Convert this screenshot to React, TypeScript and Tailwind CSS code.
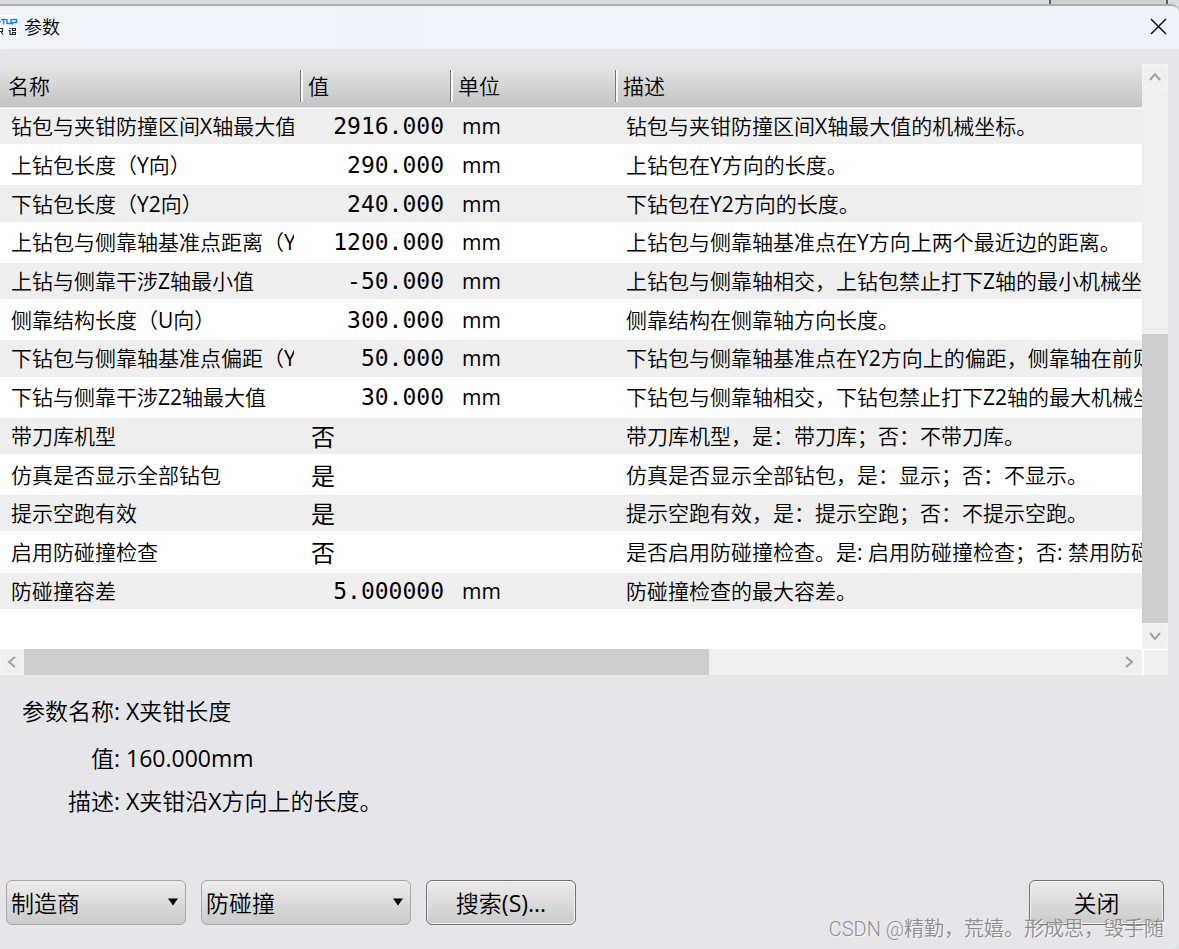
import type { ReactNode } from 'react';

interface Param {
  name: string;
  value: string;
  unit?: string;
  description: string;
}

const params: Param[] = [
  { name: '钻包与夹钳防撞区间X轴最大值', value: '2916.000', unit: 'mm', description: '钻包与夹钳防撞区间X轴最大值的机械坐标。' },
  { name: '上钻包长度（Y向）', value: '290.000', unit: 'mm', description: '上钻包在Y方向的长度。' },
  { name: '下钻包长度（Y2向）', value: '240.000', unit: 'mm', description: '下钻包在Y2方向的长度。' },
  { name: '上钻包与侧靠轴基准点距离（Y向）', value: '1200.000', unit: 'mm', description: '上钻包与侧靠轴基准点在Y方向上两个最近边的距离。' },
  { name: '上钻与侧靠干涉Z轴最小值', value: '-50.000', unit: 'mm', description: '上钻包与侧靠轴相交，上钻包禁止打下Z轴的最小机械坐标。' },
  { name: '侧靠结构长度（U向）', value: '300.000', unit: 'mm', description: '侧靠结构在侧靠轴方向长度。' },
  { name: '下钻包与侧靠轴基准点偏距（Y2向）', value: '50.000', unit: 'mm', description: '下钻包与侧靠轴基准点在Y2方向上的偏距，侧靠轴在前则为正。' },
  { name: '下钻与侧靠干涉Z2轴最大值', value: '30.000', unit: 'mm', description: '下钻包与侧靠轴相交，下钻包禁止打下Z2轴的最大机械坐标。' },
  { name: '带刀库机型', value: '否', description: '带刀库机型，是：带刀库；否：不带刀库。' },
  { name: '仿真是否显示全部钻包', value: '是', description: '仿真是否显示全部钻包，是：显示；否：不显示。' },
  { name: '提示空跑有效', value: '是', description: '提示空跑有效，是：提示空跑；否：不提示空跑。' },
  { name: '启用防碰撞检查', value: '否', description: '是否启用防碰撞检查。是: 启用防碰撞检查；否: 禁用防碰撞检查。' },
  { name: '防碰撞容差', value: '5.000000', unit: 'mm', description: '防碰撞检查的最大容差。' },
];

const columns = ['名称', '值', '单位', '描述'];

const details = [
  { label: '参数名称:', value: 'X夹钳长度' },
  { label: '值:', value: '160.000mm' },
  { label: '描述:', value: 'X夹钳沿X方向上的长度。' },
];

function AppIcon() {
  return (
    <svg width="18" height="24" viewBox="0 0 18 24" aria-hidden="true">
      <rect width="18" height="24" fill="#fff" />
      <g fill="none" stroke="#1683f5" strokeWidth="1.5">
        <path d="M0 6.5H1M1 4.5H6M3.5 4.5V9.5M7 4V8.5H11V4M12 4.5H16.5V7.5H12.5V9.5" />
      </g>
      <g fill="none" stroke="#16263f" strokeWidth="1.2">
        <path d="M0 13.5H2.5V16.5H0M1 16.5L3 19.5" />
        <path d="M9 13.5H10.5M8.5 15.5H10V19.5H16M11.5 13.5H16M12.5 13V15.5H15.5V13M12.5 17.5V19M12 17.5H15.5V19" />
      </g>
    </svg>
  );
}

function Chevron({ d }: { d: string }) {
  return (
    <svg width="14" height="14" viewBox="0 0 14 14" fill="none" stroke="#a0a0a0" strokeWidth="2" aria-hidden="true">
      <path d={d} />
    </svg>
  );
}

function ScrollButton({ label, d, className }: { label: string; d: string; className: string }) {
  return (
    <button aria-label={label} className={`flex items-center justify-center border border-[#f4f4f4] bg-[#efefef] ${className}`}>
      <Chevron d={d} />
    </button>
  );
}

function Dropdown({ label, value, className }: { label: string; value: string; className: string }) {
  return (
    <div className={`relative ${className}`}>
      <select
        aria-label={label}
        className="h-[45px] w-full appearance-none rounded-md border border-[#a9a9ab] bg-linear-to-b from-[#ececec] to-[#cacaca] pl-1 pr-8"
      >
        <option>{value}</option>
      </select>
      <svg width="10" height="8" viewBox="0 0 10 8" className="pointer-events-none absolute right-2 top-[18px]" aria-hidden="true">
        <path d="M0 0.5H10L5 7.5Z" fill="#000" />
      </svg>
    </div>
  );
}

function PushButton({ children, className }: { children: ReactNode; className: string }) {
  return (
    <button
      className={`h-[45px] rounded-md border border-[#707072] bg-linear-to-b from-[#ececec] to-[#cacaca] shadow-[inset_0_0_0_1px_#f3f3f3] ${className}`}
    >
      {children}
    </button>
  );
}

export default function App() {
  return (
    <div className="relative flex min-h-screen flex-col overflow-hidden bg-[#d9dde0] font-['Open_Sans','Noto_Sans_CJK_SC_DemiLight','Noto_Sans_CJK_SC',sans-serif] text-black">
      <div className="flex h-1 justify-end pr-[11px]">
        <div className="w-[119px] border-x-2 border-[#5c5c5e] bg-[#d0d0d0]" />
      </div>

      <main className="flex flex-1 flex-col overflow-hidden rounded-tr-lg rounded-br-lg border-t-2 border-[#a9adb0] bg-[#e6e6ea]">
        <header className="flex h-[43px] items-center bg-linear-to-r from-[#f0f4f9] to-[#eef3fb] pb-0.5">
          <AppIcon />
          <h1 className="ml-1.5 flex-1 text-[18px] leading-6">参数</h1>
          <button aria-label="关闭窗口" className="mr-3">
            <svg width="17" height="17" viewBox="0 0 17 17" fill="none" stroke="#111" strokeWidth="1.5" aria-hidden="true">
              <path d="M1 1L16 16M16 1L1 16" />
            </svg>
          </button>
        </header>

        <section className="mt-[15px] mr-[11px] grid grid-cols-[minmax(0,1fr)_26px] grid-rows-[585px_26px]">
          <div className="overflow-hidden bg-white">
            <table className="h-[545px] w-full table-fixed text-[21px] leading-7 whitespace-nowrap">
              <colgroup>
                <col className="w-[300px]" />
                <col className="w-[150px]" />
                <col className="w-[165px]" />
                <col />
              </colgroup>
              <thead>
                <tr className="h-11 border-b border-white bg-linear-to-b from-[#e6e6e6] to-[#c3c3c3] text-left">
                  {columns.map((column, index) => (
                    <th key={column} className="p-0 font-normal">
                      <div
                        className={
                          index === 0
                            ? 'pl-2'
                            : 'flex h-8 items-center border-l border-[#77777a] pl-[7px] shadow-[inset_2px_0_0_#f6f6f6]'
                        }
                      >
                        {column}
                      </div>
                    </th>
                  ))}
                </tr>
              </thead>
              <tbody>
                {params.map((param) => (
                  <tr key={param.name} className="h-[41px] odd:h-9 odd:bg-[#eeeeee]">
                    <td className="py-0 pl-[11px] pr-[6px]">
                      <div className="overflow-hidden">{param.name}</div>
                    </td>
                    <td
                      className={
                        param.unit
                          ? "py-0 pr-[6px] text-right font-['DejaVu_Sans_Mono',monospace] text-[23px]"
                          : "py-0 pl-[11px] font-['Noto_Sans_CJK_SC',sans-serif] text-[24px]"
                      }
                    >
                      {param.value}
                    </td>
                    <td className="py-0 pl-3">{param.unit}</td>
                    <td className="py-0 pl-[11px]">
                      <div className="overflow-hidden">{param.description}</div>
                    </td>
                  </tr>
                ))}
              </tbody>
            </table>
          </div>

          <div className="flex flex-col bg-[#efefef]">
            <ScrollButton label="向上滚动" d="M2 10L7 4L12 10" className="h-[26px]" />
            <div className="flex-1" />
            <div className="h-[289px] bg-[#cdcdcd]" />
            <ScrollButton label="向下滚动" d="M2 4L7 10L12 4" className="h-[26px]" />
          </div>

          <div className="flex bg-[#efefef]">
            <ScrollButton label="向左滚动" d="M10 2L4 7L10 12" className="w-6" />
            <div className="w-3/5 bg-[#cdcdcd]" />
            <div className="flex-1" />
            <ScrollButton label="向右滚动" d="M4 2L10 7L4 12" className="w-[26px]" />
          </div>
          <div className="border-t border-l-2 border-white bg-[#efefef]" />
        </section>

        <dl className="mt-3 grid grid-cols-[120px_1fr] grid-rows-[48px_46px_40px] items-center gap-x-1.5 text-[23px] leading-8">
          {details.map((detail) => (
            <div key={detail.label} className="contents">
              <dt className="text-right">{detail.label}</dt>
              <dd>{detail.value}</dd>
            </div>
          ))}
        </dl>

        <footer className="mt-auto flex gap-[15px] pr-[15px] pb-6 pl-1.5 text-[23px] leading-8">
          <Dropdown label="用户级别" value="制造商" className="w-[180px]" />
          <Dropdown label="参数类别" value="防碰撞" className="w-[210px]" />
          <PushButton className="w-[150px]">搜索(S)...</PushButton>
          <PushButton className="ml-auto w-[135px]">关闭</PushButton>
        </footer>
      </main>

      <p className="pointer-events-none absolute right-[15px] bottom-1.5 font-[Roboto,'Noto_Sans_CJK_SC',sans-serif] text-[20px] leading-7 font-[350] text-[#8f8f92] [text-shadow:1px_1px_0_#f4f4f4]">
        CSDN @精勤，荒嬉。形成思，毁手随
      </p>
    </div>
  );
}
